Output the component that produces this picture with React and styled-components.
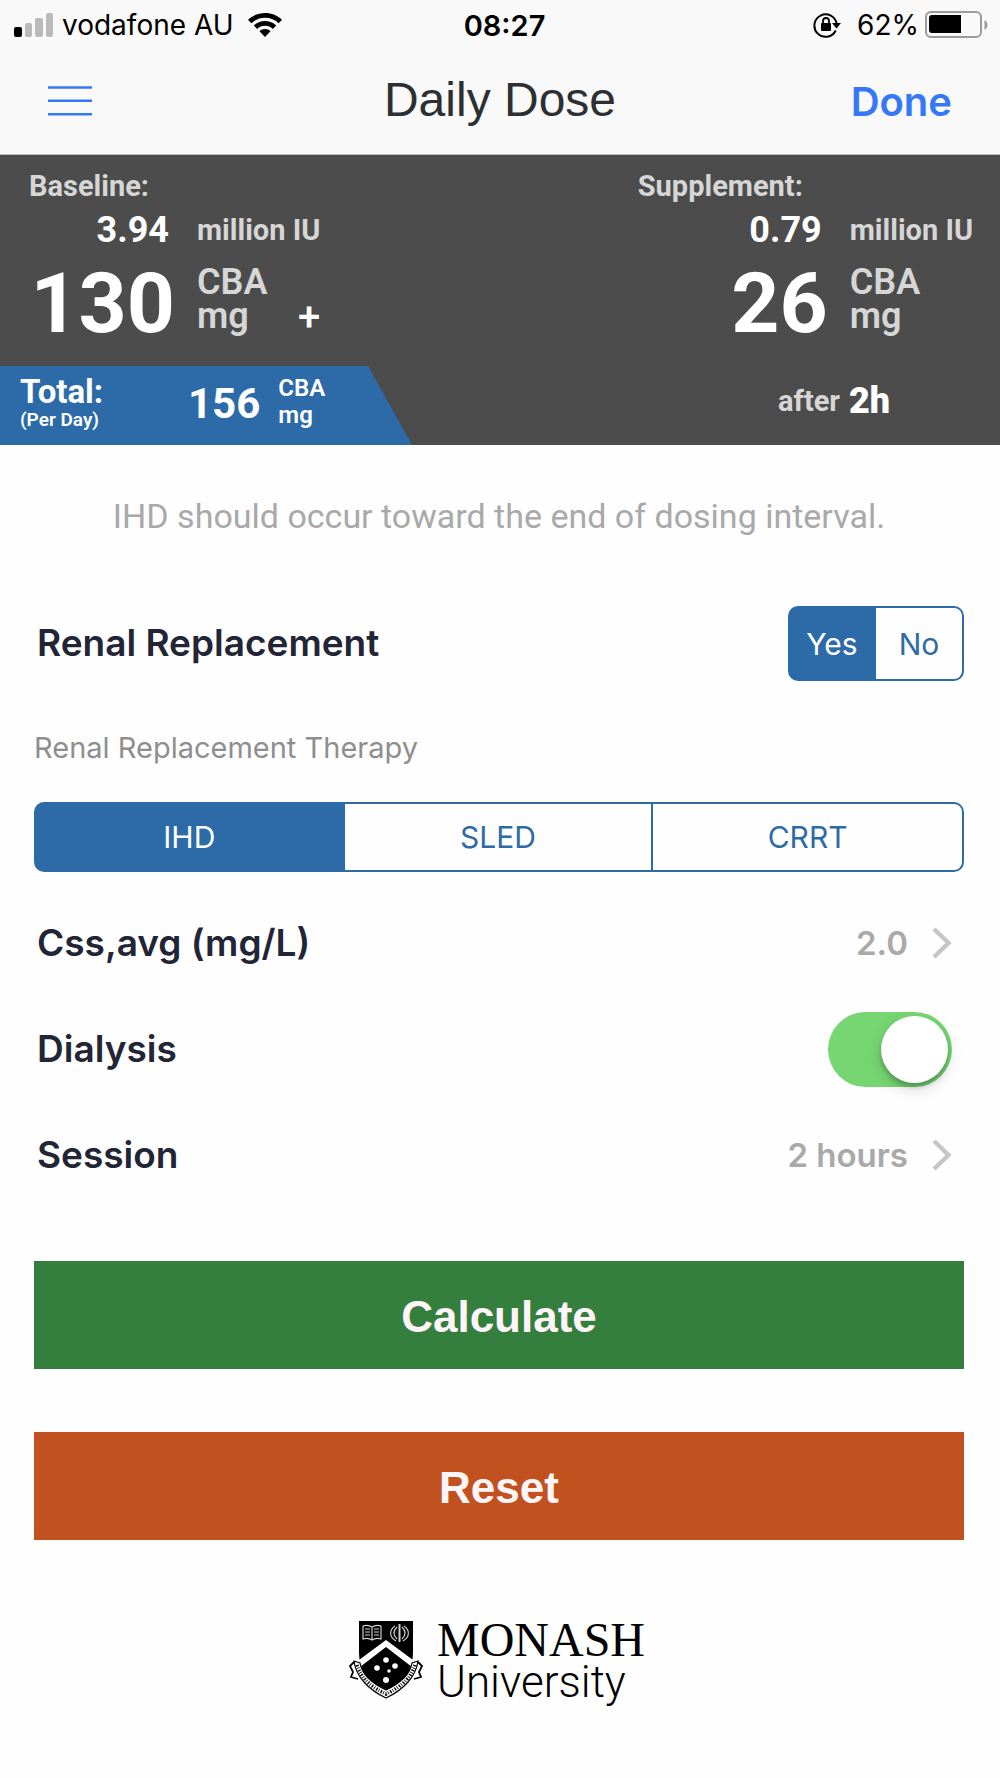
import { useState } from 'react';
import styled, { createGlobalStyle } from 'styled-components';

const GlobalStyle = createGlobalStyle`
  * {
    box-sizing: border-box;
  }

  body {
    margin: 0;
    background: #fefefe;
    font-family: Inter, "Liberation Sans", sans-serif;
    color: #222536;
  }

  button {
    font-family: inherit;
    cursor: pointer;
  }
`;

const SignalIcon = () => (
  <svg width="40" height="25" viewBox="0 0 40 25" aria-hidden="true">
    <rect x="0" y="14" width="8" height="10" rx="2" fill="#000" />
    <rect x="11" y="10" width="7" height="14" rx="2" fill="#bababa" />
    <rect x="21" y="5" width="8" height="19" rx="2" fill="#bababa" />
    <rect x="32" y="0" width="7" height="24" rx="2" fill="#bababa" />
  </svg>
);

const WifiIcon = () => (
  <svg width="34" height="24" viewBox="0 0 34 24" aria-hidden="true">
    <path d="M17 0C10.400 0 4.400 2.500 0 6.700l3.300 3.500C7 6.800 11.800 4.800 17 4.800s10 2 13.700 5.400L34 6.700C29.600 2.500 23.600 0 17 0z" />
    <path d="M17 8c-4.400 0-8.300 1.700-11.200 4.500l3.400 3.500c2-2 4.800-3.200 7.800-3.200s5.800 1.200 7.800 3.200l3.400-3.500C25.300 9.700 21.400 8 17 8z" />
    <path d="M17 16c-2.200 0-4.200.9-5.500 2.300L17 24l5.500-5.700C21.200 16.900 19.200 16 17 16z" />
  </svg>
);

const RotationLockIcon = () => (
  <svg width="28" height="26" viewBox="0 0 28 26" aria-hidden="true">
    <path d="M22.700 18.500A11.200 11.200 0 1 1 23.700 12" fill="none" stroke="#000" strokeWidth="2" />
    <path d="M19 11h9l-4.500 5.500z" />
    <rect x="8" y="11" width="10" height="8" rx="1" />
    <path d="M10 11.500V9a3 3 0 0 1 6 0v2.500" fill="none" stroke="#000" strokeWidth="1.800" />
  </svg>
);

const BatteryIcon = () => (
  <svg width="64" height="28" viewBox="0 0 64 28" aria-hidden="true">
    <rect x="1" y="1" width="55" height="25" rx="5" fill="none" stroke="#9b9b9b" strokeWidth="2" />
    <path d="M7 4h29v18H7a3 3 0 0 1-3-3V7a3 3 0 0 1 3-3z" />
    <path d="M59.500 9c4 2 4 8 0 10z" fill="#9b9b9b" />
  </svg>
);

const MenuIcon = () => (
  <svg width="44" height="30" viewBox="0 0 44 30" aria-hidden="true">
    <path d="M0 1.500h44M0 14.800h44M0 28.200h44" stroke="#3478f6" strokeWidth="2.400" />
  </svg>
);

const ChevronIcon = () => (
  <svg width="20" height="32" viewBox="0 0 20 32" aria-hidden="true">
    <path d="M2 2l14.500 14L2 30" fill="none" stroke="#c5c5ca" strokeWidth="4.400" />
  </svg>
);

const Crest = () => (
  <svg width="74" height="80" viewBox="0 0 74 80" aria-hidden="true">
    <path d="M10 1h54v30c0 22-10 33-27 42C20 64 10 53 10 31z" fill="#000" />
    <path d="M10 40l27-20 27 20-1 7-26-20-26 20z" fill="#fff" />
    <g fill="none" stroke="#ccc" strokeWidth="1.200">
      <path d="M14 6c3-1 6-1 9 1 3-2 6-2 9-1v13c-3-1-6-1-9 1-3-2-6-2-9-1zM23 7v13M16 9h5M16 12h5M16 15h5M25 9h5M25 12h5M25 15h5" />
      <path d="M46 6c-6 4-6 11 1 15M55 6c6 4 6 11-1 15M48 7c-4 4-4 8 0 12M53 7c4 4 4 8 0 12" />
      <path d="M50.500 4v18" strokeWidth="2" />
    </g>
    <g fill="#fff">
      <circle cx="37" cy="40" r="2.800" />
      <circle cx="28" cy="48" r="2.800" />
      <circle cx="46" cy="46" r="2.800" />
      <circle cx="40" cy="51" r="1.800" />
      <circle cx="37" cy="60" r="3" />
    </g>
    <path d="M5 42L1 46l3 6-2 5 7 2M69 42l4 4-3 6 2 5-7 2" fill="#fff" stroke="#000" strokeWidth="1.800" />
    <path d="M5 41c2 16 15 29 32 37 17-8 30-21 32-37l-6 2C61 55 52 63 37 70 22 63 13 55 11 43z" fill="#fff" stroke="#000" strokeWidth="1.200" />
    <path d="M8 45c4 13 14 22 29 29 15-7 25-16 29-29" fill="none" stroke="#000" strokeWidth="3.500" strokeDasharray="1.400 1.400 .8 1.600" />
  </svg>
);

const Segments = ({ label, name, options, value, onChange, $compact }) => (
  <SegmentGroup role="radiogroup" aria-label={label} $compact={$compact}>
    {options.map((option) => (
      <Segment key={option}>
        <input
          type="radio"
          name={name}
          checked={value === option}
          onChange={() => onChange(option)}
        />
        <span>{option}</span>
      </Segment>
    ))}
  </SegmentGroup>
);

const App = () => {
  const [replacement, setReplacement] = useState('Yes');
  const [therapy, setTherapy] = useState('IHD');
  const [dialysis, setDialysis] = useState(true);

  return (
    <>
      <GlobalStyle />
      <Header>
        <StatusBar>
          <StatusSide $gap="8px">
            <SignalIcon />
            <Carrier>vodafone AU</Carrier>
            <WifiIcon />
          </StatusSide>
          <Clock>08:27</Clock>
          <StatusSide $end $gap="6px">
            <RotationLockIcon />
            <Charge>62%</Charge>
            <BatteryIcon />
          </StatusSide>
        </StatusBar>
        <NavBar>
          <MenuButton aria-label="Menu">
            <MenuIcon />
          </MenuButton>
          <Title>Daily Dose</Title>
          <DoneButton>Done</DoneButton>
        </NavBar>
      </Header>

      <Summary>
        <Doses>
          <Dose $number="146px">
            <DoseLabel>Baseline:</DoseLabel>
            <Amount>3.94</Amount>
            <Unit>million IU</Unit>
            <BigAmount>130</BigAmount>
            <BigUnit>CBA<br />mg</BigUnit>
            <Plus>+</Plus>
          </Dose>
          <Dose $number="190px">
            <DoseLabel>Supplement:</DoseLabel>
            <Amount>0.79</Amount>
            <Unit>million IU</Unit>
            <BigAmount>26</BigAmount>
            <BigUnit>CBA<br />mg</BigUnit>
          </Dose>
        </Doses>
        <Totals>
          <Total>
            <TotalLabel>
              Total:
              <small>(Per Day)</small>
            </TotalLabel>
            <TotalAmount>156</TotalAmount>
            <TotalUnit>CBA<br />mg</TotalUnit>
          </Total>
          <After>
            after <strong>2h</strong>
          </After>
        </Totals>
      </Summary>

      <Main>
        <Hint>IHD should occur toward the end of dosing interval.</Hint>
        <Row>
          <RowLabel as="span">Renal Replacement</RowLabel>
          <Segments
            label="Renal Replacement"
            name="replacement"
            options={['Yes', 'No']}
            value={replacement}
            onChange={setReplacement}
            $compact
          />
        </Row>
        <SectionLabel>Renal Replacement Therapy</SectionLabel>
        <Segments
          label="Renal Replacement Therapy"
          name="therapy"
          options={['IHD', 'SLED', 'CRRT']}
          value={therapy}
          onChange={setTherapy}
        />
        <Rows>
          <Row>
            <RowLabel as="span" id="css">Css,avg (mg/L)</RowLabel>
            <ValueButton aria-describedby="css">
              2.0
              <ChevronIcon />
            </ValueButton>
          </Row>
          <Row>
            <RowLabel htmlFor="dialysis">Dialysis</RowLabel>
            <Switch
              id="dialysis"
              type="checkbox"
              role="switch"
              checked={dialysis}
              onChange={(e) => setDialysis(e.target.checked)}
            />
          </Row>
          <Row>
            <RowLabel as="span" id="session">Session</RowLabel>
            <ValueButton aria-describedby="session">
              2 hours
              <ChevronIcon />
            </ValueButton>
          </Row>
        </Rows>
        <Actions>
          <ActionButton $color="#347e3e">Calculate</ActionButton>
          <ActionButton $color="#c1521f">Reset</ActionButton>
        </Actions>
        <Logo>
          <Crest />
          <LogoText>
            <LogoName>MONASH</LogoName>
            <LogoKind>University</LogoKind>
          </LogoText>
        </Logo>
      </Main>
    </>
  );
};

const Header = styled.header`
  background: #f9f9f9;
  border-bottom: 1px solid #b8b8b8;
`;

const StatusBar = styled.div`
  display: grid;
  grid-template-columns: 1fr auto 1fr;
  align-items: center;
  height: 50px;
  padding: 0 11px 0 14px;
  color: #000;
`;

const StatusSide = styled.div`
  display: flex;
  align-items: center;
  justify-content: ${(p) => (p.$end ? 'flex-end' : 'flex-start')};
  gap: ${(p) => p.$gap};
`;

const Carrier = styled.span`
  font-size: 28px;
  margin-right: 6px;
`;

const Clock = styled.time`
  padding-left: 6px;
  font-size: 29px;
  font-weight: 600;
`;

const Charge = styled.span`
  font-size: 28px;
  margin-left: 10px;
`;

const NavBar = styled.nav`
  display: grid;
  grid-template-columns: 1fr auto 1fr;
  align-items: center;
  height: 104px;
  padding: 0 48px 2px;
`;

const MenuButton = styled.button`
  justify-self: start;
  display: flex;
  padding: 0;
  border: none;
  background: none;
`;

const Title = styled.h1`
  margin: 0;
  padding-bottom: 4px;
  font-family: "Liberation Sans", Arial, sans-serif;
  font-size: 48px;
  font-weight: 400;
  color: #2d3033;
`;

const DoneButton = styled.button`
  justify-self: end;
  padding: 0;
  border: none;
  background: none;
  font-size: 40px;
  font-weight: 600;
  color: #3478f6;
`;

const Summary = styled.section`
  background: #4c4c4c;
  font-family: Roboto, "Open Sans", sans-serif;
  font-weight: 700;
  color: #fff;
`;

const Doses = styled.div`
  display: flex;
  justify-content: space-between;
  padding: 13px 27px 14px 29px;
`;

const Dose = styled.div`
  display: grid;
  grid-template-columns: ${(p) => p.$number} auto auto;
  column-gap: 22px;
  align-items: center;
`;

const DoseLabel = styled.span`
  grid-column: 1 / -1;
  font-size: 29px;
  line-height: 36px;
  color: #d6d6d6;
`;

const Amount = styled.span`
  padding-right: 6px;
  font-size: 36px;
  line-height: 52px;
  text-align: right;
`;

const Unit = styled.span`
  grid-column: span 2;
  font-size: 29px;
  line-height: 52px;
  color: #d6d6d6;
`;

const BigAmount = styled.span`
  font-size: 84px;
  line-height: 96px;
  text-align: right;
`;

const BigUnit = styled.span`
  align-self: start;
  padding-top: 9px;
  font-size: 36px;
  font-weight: 600;
  line-height: 34px;
  color: #d6d6d6;
`;

const Plus = styled.span`
  align-self: end;
  justify-self: end;
  font-size: 40px;
  font-weight: 500;
  line-height: 68px;
`;

const Totals = styled.div`
  display: flex;
  justify-content: space-between;
  height: 79px;
`;

const Total = styled.div`
  display: flex;
  align-items: center;
  width: 412px;
  padding: 0 0 4px 20px;
  background: #2d6ba8;
  clip-path: polygon(0 0, 368px 0, 100% 100%, 0 100%);
`;

const TotalLabel = styled.span`
  width: 168px;
  font-size: 33px;
  line-height: 32px;

  small {
    display: block;
    font-size: 19px;
    font-weight: 600;
    line-height: 24px;
  }
`;

const TotalAmount = styled.span`
  font-size: 42px;
`;

const TotalUnit = styled.span`
  padding: 0 0 4px 18px;
  font-size: 24px;
  font-weight: 600;
  line-height: 27px;
`;

const After = styled.span`
  display: flex;
  align-items: center;
  gap: 9px;
  width: 222px;
  padding-bottom: 10px;
  font-size: 29px;
  color: #d6d6d6;

  strong {
    font-size: 36px;
    color: #fff;
  }
`;

const Main = styled.main`
  padding: 0 36px 0 34px;
`;

const Hint = styled.p`
  margin: 0;
  padding: 52px 0 71px;
  font-family: Roboto, "Open Sans", sans-serif;
  font-size: 34px;
  line-height: 38px;
  text-align: center;
  color: #a9a9a9;
`;

const Row = styled.div`
  display: flex;
  align-items: center;
  justify-content: space-between;
  min-height: 75px;
  padding-left: 3px;
`;

const Rows = styled.div`
  display: grid;
  grid-auto-rows: 106px;
  padding: 18px 12px 0 0;
`;

const RowLabel = styled.label`
  padding-bottom: 2px;
  font-size: 37px;
  font-weight: 600;
`;

const SectionLabel = styled.p`
  margin: 0;
  padding: 48px 0 36px;
  font-size: 29px;
  line-height: 37px;
  color: #8e8e8e;
`;

const SegmentGroup = styled.div`
  display: grid;
  grid-auto-flow: column;
  grid-auto-columns: 1fr;
  width: ${(p) => (p.$compact ? '176px' : '100%')};
  height: ${(p) => (p.$compact ? '75px' : '70px')};
  border: 2px solid #2d6ba8;
  border-radius: 10px;
  background: #2d6ba8;
  overflow: hidden;
`;

const Segment = styled.label`
  display: grid;
  background: #fefefe;
  cursor: pointer;

  &:not(:last-child) {
    border-right: 2px solid #2d6ba8;
  }

  input {
    grid-area: 1 / 1;
    appearance: none;
    margin: 0;
  }

  &:has(input:checked) {
    background: #2d6ba8;
  }

  span {
    grid-area: 1 / 1;
    place-self: center;
    font-size: 30px;
    color: #2d6ba8;
  }

  input:checked + span {
    color: #fff;
  }
`;

const ValueButton = styled.button`
  display: flex;
  align-items: center;
  gap: 24px;
  padding: 0;
  border: none;
  background: none;
  font-size: 33px;
  font-weight: 600;
  color: #a9a9a9;
`;

const Switch = styled.input`
  appearance: none;
  display: flex;
  width: 124px;
  height: 75px;
  margin: 0;
  padding: 4px;
  border-radius: 38px;
  background: ${(p) => (p.checked ? '#76d672' : '#e5e5ea')};
  justify-content: ${(p) => (p.checked ? 'flex-end' : 'flex-start')};
  cursor: pointer;

  &::before {
    content: "";
    width: 67px;
    height: 67px;
    border-radius: 50%;
    background: #fff;
    box-shadow: 0 6px 16px rgba(0, 0, 0, 0.15), 0 4px 4px rgba(0, 0, 0, 0.2);
  }
`;

const Actions = styled.div`
  display: grid;
  gap: 63px;
  padding-top: 53px;
`;

const ActionButton = styled.button`
  height: 108px;
  padding: 4px 0 0;
  border: none;
  background: ${(p) => p.$color};
  font-family: "Liberation Sans", Arial, sans-serif;
  font-size: 44px;
  font-weight: 700;
  color: #fdf5f7;
`;

const Logo = styled.footer`
  display: flex;
  justify-content: center;
  gap: 14px;
  padding: 80px 4px 70px 0;
`;

const LogoText = styled.div`
  color: #000;
`;

const LogoName = styled.div`
  font-family: "Liberation Serif", "Times New Roman", serif;
  font-size: 48px;
  line-height: 40px;
`;

const LogoKind = styled.div`
  font-family: Roboto, "Liberation Sans", sans-serif;
  font-size: 44px;
  font-weight: 300;
  line-height: 44px;
`;

export default App;
